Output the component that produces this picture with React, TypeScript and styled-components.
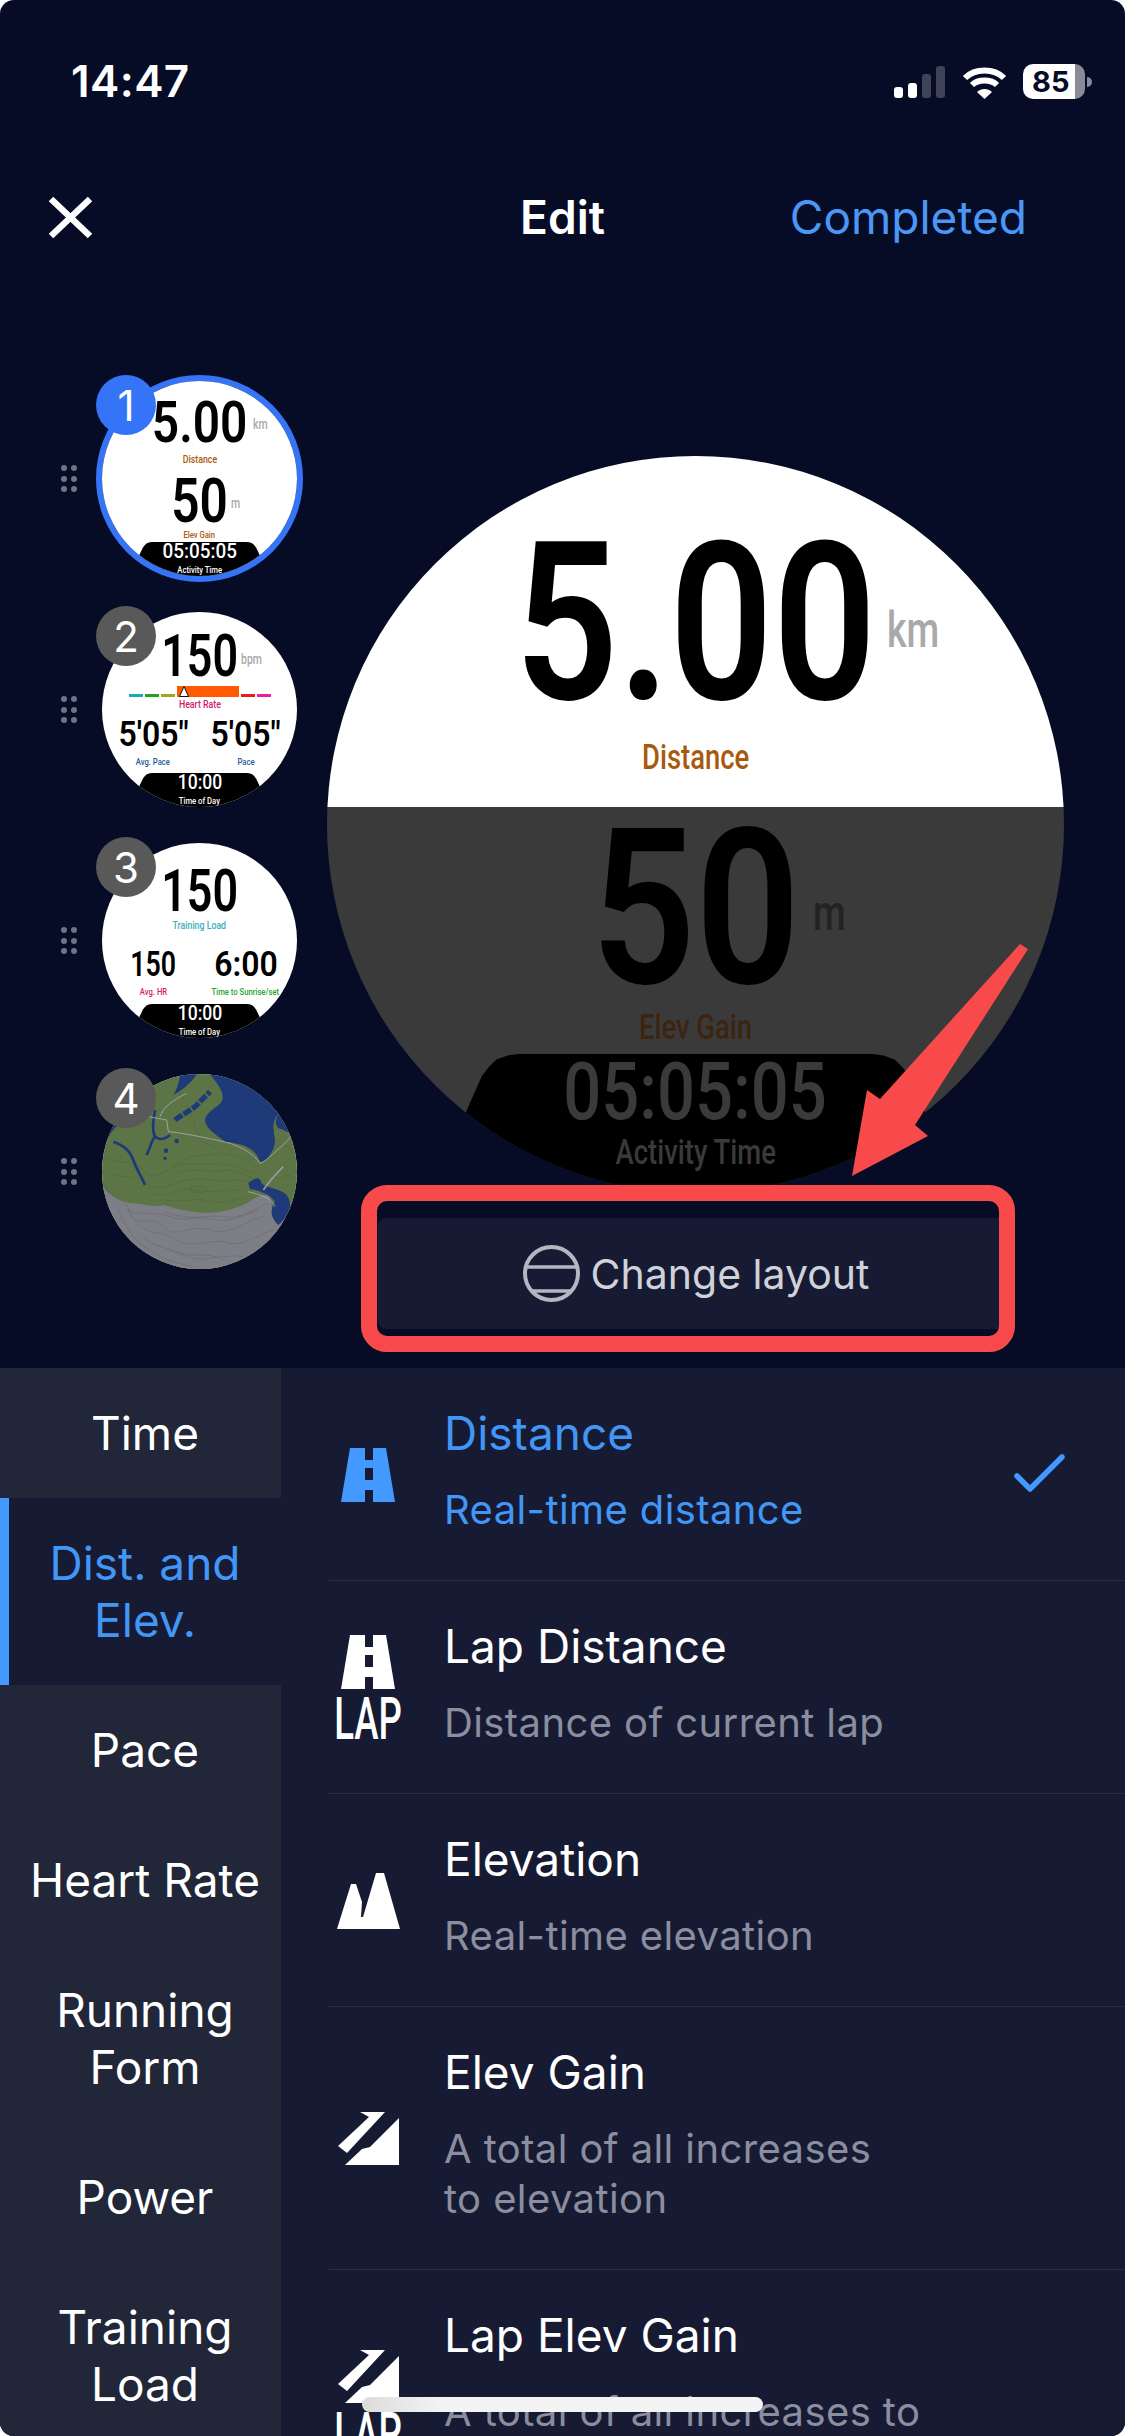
import styled, { createGlobalStyle } from 'styled-components'

const GlobalStyle = createGlobalStyle`
  html,
  body {
    margin: 0;
    padding: 0;
    background: #ffffff;
  }
  * {
    box-sizing: border-box;
  }
`

const categories = [
  'Time',
  'Dist. and Elev.',
  'Pace',
  'Heart Rate',
  'Running Form',
  'Power',
  'Training Load',
]

export default function App() {
  return (
    <Screen>
      <GlobalStyle />
      <StatusBar>
        <Clock>14:47</Clock>
        <StatusIcons>
          <SignalBars>
            <SignalBar $h={11} $on />
            <SignalBar $h={15} $on />
            <SignalBar $h={24} />
            <SignalBar $h={32} />
          </SignalBars>
          <WifiIcon />
          <Battery>
            <BatteryBody>85</BatteryBody>
            <BatteryNub />
          </Battery>
        </StatusIcons>
      </StatusBar>

      <NavBar>
        <CloseIcon />
        <NavTitle>Edit</NavTitle>
        <NavAction>Completed</NavAction>
      </NavBar>

      <Editor>
        <ThumbColumn>
          <ThumbRow>
            <DragDots />
            <ThumbSlot $active>
              <Face>
                <FirstFace />
              </Face>
              <Badge $active>1</Badge>
            </ThumbSlot>
          </ThumbRow>
          <ThumbRow>
            <DragDots />
            <ThumbSlot>
              <Face>
                <SecondFace />
              </Face>
              <Badge>2</Badge>
            </ThumbSlot>
          </ThumbRow>
          <ThumbRow>
            <DragDots />
            <ThumbSlot>
              <Face>
                <ThirdFace />
              </Face>
              <Badge>3</Badge>
            </ThumbSlot>
          </ThumbRow>
          <ThumbRow>
            <DragDots />
            <ThumbSlot>
              <Face>
                <MapFace />
              </Face>
              <Badge>4</Badge>
            </ThumbSlot>
          </ThumbRow>
        </ThumbColumn>

        <PreviewColumn>
          <BigFace>
            <BigTop>
              <ValueRow>
                <Digits $h={157} $sx={0.82} $mt={89}>
                  5.00
                </Digits>
                <Unit $fs={50} $x={191} $y={149} $color="#a9a9a9">
                  km
                </Unit>
              </ValueRow>
              <Caption $h={25} $mt={43} $color="#a85a0c">
                Distance
              </Caption>
            </BigTop>
            <BigBottom>
              <ValueRow>
                <Digits $h={155} $sx={0.84} $mt={24}>
                  50
                </Digits>
                <Unit $fs={50} $x={117} $y={81} $color="#232323">
                  m
                </Unit>
              </ValueRow>
              <Caption $h={25} $mt={29} $color="#3d2410">
                Elev Gain
              </Caption>
              <Footer $mt={14}>
                <Digits $h={56} $sx={0.85} $mt={10} $color="#3a3a3a" $weight={500}>
                  05:05:05
                </Digits>
                <Caption $h={25} $mt={20} $color="#3a3a3a">
                  Activity Time
                </Caption>
              </Footer>
            </BigBottom>
          </BigFace>

          <LayoutButton>
            <LayoutIcon />
            <span>Change layout</span>
            <RedFrame />
          </LayoutButton>
        </PreviewColumn>

        <ArrowMark viewBox="840 940 200 245">
          <polygon
            points="852,1176 867,1090 880,1099 1020,944 1028,949 915,1125 928,1136"
            fill="#f84a4a"
          />
        </ArrowMark>
      </Editor>

      <Panel>
        <Rail>
          {categories.map((name) => (
            <RailItem key={name} $active={name === 'Dist. and Elev.'}>
              {name}
            </RailItem>
          ))}
        </Rail>
        <MetricList>
          <MetricRow>
            <MetricIcon>
              <RoadIcon color="#4299ff" />
            </MetricIcon>
            <MetricText>
              <MetricTitle $active>Distance</MetricTitle>
              <MetricDesc $active>Real-time distance</MetricDesc>
            </MetricText>
            <CheckIcon />
          </MetricRow>
          <MetricRow>
            <MetricIcon>
              <RoadIcon color="#ffffff" />
              <LapLabel>LAP</LapLabel>
            </MetricIcon>
            <MetricText>
              <MetricTitle>Lap Distance</MetricTitle>
              <MetricDesc>Distance of current lap</MetricDesc>
            </MetricText>
          </MetricRow>
          <MetricRow>
            <MetricIcon>
              <PeakIcon />
            </MetricIcon>
            <MetricText>
              <MetricTitle>Elevation</MetricTitle>
              <MetricDesc>Real-time elevation</MetricDesc>
            </MetricText>
          </MetricRow>
          <MetricRow>
            <MetricIcon>
              <GainIcon />
            </MetricIcon>
            <MetricText>
              <MetricTitle>Elev Gain</MetricTitle>
              <MetricDesc>
                A total of all increases
                <br />
                to elevation
              </MetricDesc>
            </MetricText>
          </MetricRow>
          <MetricRow>
            <MetricIcon>
              <GainIcon />
              <LapLabel>LAP</LapLabel>
            </MetricIcon>
            <MetricText>
              <MetricTitle>Lap Elev Gain</MetricTitle>
              <MetricDesc>
                A total of all increases to
                <br />
                elevation of current lap
              </MetricDesc>
            </MetricText>
          </MetricRow>
        </MetricList>
      </Panel>

      <HomeIndicator />
    </Screen>
  )
}

function FirstFace() {
  return (
    <>
      <ValueRow>
        <Digits $h={41} $sx={0.83} $mt={21}>
          5.00
        </Digits>
        <Unit $fs={14} $x={53} $y={36} $color="#a9a9a9">
          km
        </Unit>
      </ValueRow>
      <Caption $h={8} $mt={13} $color="#a85a0c">
        Distance
      </Caption>
      <ValueRow>
        <Digits $h={43} $sx={0.82} $mt={16}>
          50
        </Digits>
        <Unit $fs={14} $x={31} $y={32} $color="#a9a9a9">
          m
        </Unit>
      </ValueRow>
      <Caption $h={7} $mt={8} $color="#a85a0c">
        Elev Gain
      </Caption>
      <Footer $mt={4}>
        <Digits $h={14} $sx={0.96} $mt={3} $color="#ffffff" $weight={500}>
          05:05:05
        </Digits>
        <Caption $h={7} $mt={7} $color="#ffffff">
          Activity Time
        </Caption>
      </Footer>
    </>
  )
}

function SecondFace() {
  return (
    <>
      <ValueRow>
        <Digits $h={42} $sx={0.76} $mt={23}>
          150
        </Digits>
        <Unit $fs={14} $x={41} $y={40} $color="#a9a9a9">
          bpm
        </Unit>
      </ValueRow>
      <ZoneBar>
        <Zone $w={14} $color="#17a9b5" />
        <Zone $w={14} $color="#1fa51f" />
        <Zone $w={14} $color="#a5a51f" />
        <Zone $w={62} $color="#ff5a00" $big />
        <Zone $w={14} $color="#e8201f" />
        <Zone $w={14} $color="#e81fa8" />
        <ZoneMarker viewBox="0 0 10 11">
          <polygon points="5,0.5 9.5,10.5 0.5,10.5" fill="#ffffff" stroke="#111111" />
        </ZoneMarker>
      </ZoneBar>
      <Caption $h={8} $mt={4} $color="#d01a6e">
        Heart Rate
      </Caption>
      <Pair $mt={13}>
        <PairCell>
          <Digits $h={25} $sx={0.91}>
            5'05"
          </Digits>
          <Caption $h={7} $mt={11} $color="#1f5c9a">
            Avg. Pace
          </Caption>
        </PairCell>
        <PairCell>
          <Digits $h={25} $sx={0.91}>
            5'05"
          </Digits>
          <Caption $h={7} $mt={11} $color="#1f5c9a">
            Pace
          </Caption>
        </PairCell>
      </Pair>
      <Footer $mt={8}>
        <Digits $h={14} $sx={0.89} $mt={3} $color="#ffffff" $weight={500}>
          10:00
        </Digits>
        <Caption $h={7} $mt={7} $color="#ffffff">
          Time of Day
        </Caption>
      </Footer>
    </>
  )
}

function ThirdFace() {
  return (
    <>
      <Digits $h={42} $sx={0.76} $mt={27}>
        150
      </Digits>
      <Caption $h={8} $mt={10} $color="#39b0b8">
        Training Load
      </Caption>
      <Pair $mt={22}>
        <PairCell>
          <Digits $h={25} $sx={0.76}>
            150
          </Digits>
          <Caption $h={7} $mt={11} $color="#d81a6e">
            Avg. HR
          </Caption>
        </PairCell>
        <PairCell>
          <Digits $h={25} $sx={0.91}>
            6:00
          </Digits>
          <Caption $h={7} $mt={11} $color="#22a52a">
            Time to Sunrise/set
          </Caption>
        </PairCell>
      </Pair>
      <Footer $mt={9}>
        <Digits $h={14} $sx={0.89} $mt={3} $color="#ffffff" $weight={500}>
          10:00
        </Digits>
        <Caption $h={7} $mt={7} $color="#ffffff">
          Time of Day
        </Caption>
      </Footer>
    </>
  )
}

// coordinates below are in the zoomed crop of the reference
function MapFace() {
  const greenLines = [
    'M232 1010 C270 1040 300 1010 340 1050 C370 1080 400 1060 430 1040 C470 1020 520 1040 560 1030 C600 1030 640 1050 680 1060',
    'M240 1060 C280 1080 320 1060 350 1090 C390 1120 420 1090 470 1080 C520 1070 570 1090 620 1080 C650 1080 670 1090 680 1080',
    'M370 1120 C410 1140 440 1100 490 1110 C540 1120 580 1110 640 1110',
    'M410 1140 C450 1150 490 1130 540 1145 C580 1150 620 1140 650 1130',
    'M430 1040 C470 1000 520 1010 570 1000 C610 1000 650 1020 680 1040',
    'M440 1060 C490 1040 540 1060 590 1050 C630 1050 650 1070 670 1075',
    'M480 1105 C490 1095 530 1095 530 1110 C530 1122 490 1122 480 1105',
    'M740 1050 C760 1030 790 1040 800 1060 M750 1075 C770 1060 790 1065 800 1080',
    'M730 990 C750 960 780 980 790 1000',
    'M420 790 C440 810 470 850 490 900 C500 950 530 980 560 985',
  ]
  const greyLines = [
    'M225 1100 C250 1140 290 1130 300 1180 C320 1230 370 1180 400 1220 C440 1260 480 1210 540 1230 C600 1250 650 1200 700 1190',
    'M290 1170 C340 1190 370 1170 420 1190 C470 1210 520 1180 580 1190 C630 1200 670 1170 710 1150',
    'M320 1210 C360 1250 400 1230 440 1260 C490 1290 540 1250 600 1270 C640 1280 690 1240 730 1230',
    'M340 1250 C380 1290 430 1280 470 1310 C520 1330 580 1300 640 1310',
    'M400 1175 C450 1195 510 1190 560 1200 C600 1205 640 1190 680 1170',
    'M260 1160 C280 1200 300 1260 360 1290 C400 1320 440 1330 490 1340',
    'M420 1290 C470 1320 530 1290 580 1320',
  ]
  return (
    <MapDrawing viewBox="216 762 585 585">
      <rect x="216" y="762" width="585" height="585" fill="#5d7546" />
      <path
        d="M540 762 C560 790 580 810 578 835 C575 860 530 870 525 900 C525 925 560 945 585 965 C620 970 660 975 680 1005 L692 1028 C715 1020 735 990 735 960 C730 930 725 900 745 885 C730 850 680 800 620 762 Z"
        fill="#1f3a78"
      />
      <path d="M745 885 C735 900 735 915 745 925 C760 930 775 935 785 945 L800 900 L760 860 Z" fill="#1f3a78" />
      <path d="M450 770 C445 790 440 810 430 825 C450 815 485 790 500 762 L450 762 Z" fill="#1f3a78" />
      <path d="M216 990 C230 960 245 930 265 915 L250 870 L216 920 Z" fill="#1f3a78" />
      <path
        d="M250 965 C280 975 300 990 310 1020 C320 1050 335 1070 345 1095"
        stroke="#1f3a78"
        strokeWidth="8"
        fill="none"
      />
      <path
        d="M350 1005 C360 985 365 960 375 950 M375 950 C385 955 395 965 420 945 M375 950 C365 930 370 900 375 870"
        stroke="#1f3a78"
        strokeWidth="8"
        fill="none"
      />
      <circle cx="408" cy="992" r="7" fill="#1f3a78" />
      <circle cx="405" cy="1015" r="5" fill="#1f3a78" />
      <circle cx="440" cy="963" r="7" fill="#1f3a78" />
      <path
        d="M435 900 C460 880 490 870 510 845 L540 815"
        stroke="#1f3a78"
        strokeWidth="16"
        strokeDasharray="26 5"
        fill="none"
      />
      <path
        d="M216 1090 C225 1120 260 1140 300 1150 C340 1150 370 1165 400 1155 C430 1165 460 1170 490 1175 C540 1185 600 1175 650 1150 C680 1130 700 1120 720 1130 C730 1160 720 1190 745 1215 L810 1150 L810 1360 L216 1360 Z"
        fill="#7e7f86"
      />
      <path
        d="M655 1090 C670 1075 690 1065 695 1090 C710 1105 750 1105 770 1125 C785 1145 785 1170 760 1200 L745 1215 C720 1190 720 1170 735 1145 C720 1125 690 1110 660 1108 Z"
        fill="#1f3a78"
      />
      {greenLines.map((d) => (
        <path key={d} d={d} stroke="#36452b" strokeWidth="1" fill="none" opacity="0.5" />
      ))}
      {greyLines.map((d) => (
        <path key={d} d={d} stroke="#37373e" strokeWidth="1" fill="none" opacity="0.5" />
      ))}
      <path
        d="M355 890 L410 900 L415 935 C470 940 560 960 600 970 C640 985 670 1000 690 1030 C715 1020 740 990 770 965 L790 940"
        stroke="#a9acac"
        strokeWidth="2.5"
        fill="none"
      />
      <path d="M390 890 C400 860 430 840 470 820" stroke="#a9acac" strokeWidth="2.5" fill="none" />
      <path d="M655 1115 C690 1125 720 1130 735 1160" stroke="#a9acac" strokeWidth="2.5" fill="none" />
      <path d="M700 1110 C720 1080 740 1060 760 1040" stroke="#9a9c9c" strokeWidth="5" fill="none" />
    </MapDrawing>
  )
}

function DragDots() {
  return (
    <DotGrid>
      <i />
      <i />
      <i />
      <i />
      <i />
      <i />
    </DotGrid>
  )
}

function WifiIcon() {
  return (
    <WifiSvg viewBox="0 0 45 32">
      <path d="M3 11 C13 1 32 1 42 11" stroke="#ffffff" strokeWidth="6" fill="none" />
      <path d="M10 18 C16 12 29 12 35 18" stroke="#ffffff" strokeWidth="6" fill="none" />
      <path d="M15 25 C19 21 26 21 30 25 L22.5 32 Z" fill="#ffffff" />
    </WifiSvg>
  )
}

function CloseIcon() {
  return (
    <CloseSvg viewBox="0 0 45 43">
      <path d="M3 3 L42 40 M42 3 L3 40" stroke="#ffffff" strokeWidth="6.5" fill="none" />
    </CloseSvg>
  )
}

function LayoutIcon() {
  return (
    <LayoutSvg viewBox="0 0 57 57">
      <circle cx="28.5" cy="28.5" r="26.5" stroke="#b4b6c2" strokeWidth="4" fill="none" />
      <path d="M3 22 H54 M9 46 H48" stroke="#b4b6c2" strokeWidth="3.5" fill="none" />
    </LayoutSvg>
  )
}

function RoadIcon({ color }: { color: string }) {
  return (
    <RoadSvg viewBox="0 0 54 54">
      <path
        d="M9 0 H24 V12 H32 V0 H45 L54 54 H32 V42 H24 V54 H0 Z M24 20 H32 V32 H24 Z"
        fill={color}
        fillRule="evenodd"
      />
    </RoadSvg>
  )
}

function PeakIcon() {
  return (
    <PeakSvg viewBox="0 0 63 57">
      <path
        d="M0 57 L14 12 L19 12 L25 30 L24 45 L26 45 L39 1 L47 1 L63 57 Z"
        fill="#ffffff"
      />
    </PeakSvg>
  )
}

function GainIcon() {
  return (
    <GainSvg viewBox="0 0 61 55">
      <path d="M22 1 L47 1 L9 42 L0 35 L31 6 Z" fill="#ffffff" />
      <path d="M61 7 L61 54 L7 54 L24 38 L32 36 Z" fill="#ffffff" />
    </GainSvg>
  )
}

function CheckIcon() {
  return (
    <CheckSvg viewBox="0 0 54 42">
      <path
        d="M4 24 L17 37 L49 5"
        stroke="#4299ff"
        strokeWidth="5.5"
        strokeLinecap="round"
        strokeLinejoin="round"
        fill="none"
      />
    </CheckSvg>
  )
}

// ========== Styled Components ==========

const sans = `Inter, 'Liberation Sans', sans-serif`
const watchFont = `Roboto, 'Liberation Sans', sans-serif`

const Screen = styled.div`
  position: relative;
  width: 1125px;
  height: 2436px;
  overflow: hidden;
  border-radius: 14px;
  background: #060c26;
  font-family: ${sans};
  color: #ffffff;
`

const StatusBar = styled.div`
  height: 120px;
  padding: 0 33px 0 71px;
  display: flex;
  justify-content: space-between;
  align-items: flex-start;
`

const Clock = styled.div`
  margin-top: 57px;
  font-size: 44px;
  line-height: 48px;
  font-weight: 600;
  letter-spacing: 0.4px;
`

const StatusIcons = styled.div`
  margin-top: 64px;
  display: flex;
  align-items: flex-start;
`

const SignalBars = styled.div`
  width: 51px;
  height: 34px;
  display: flex;
  justify-content: space-between;
  align-items: flex-end;
`

const SignalBar = styled.div<{ $h: number; $on?: boolean }>`
  width: 9px;
  height: ${(p) => p.$h}px;
  border-radius: 3px;
  background: ${(p) => (p.$on ? '#ffffff' : '#3e4358')};
`

const WifiSvg = styled.svg`
  width: 45px;
  height: 32px;
  margin: 3px 16px 0 17px;
`

const Battery = styled.div`
  display: flex;
  align-items: center;
`

const BatteryBody = styled.div`
  width: 62px;
  height: 35px;
  border-radius: 10px;
  background: linear-gradient(to right, #ffffff 84%, #8a8b99 84%);
  color: #060c26;
  font-size: 29px;
  line-height: 35px;
  font-weight: 700;
  padding-left: 9px;
`

const BatteryNub = styled.div`
  width: 5px;
  height: 10px;
  margin-left: 2px;
  border-radius: 0 5px 5px 0;
  background: #8a8b99;
`

const NavBar = styled.div`
  height: 194px;
  padding: 0 48px;
  display: grid;
  grid-template-columns: 1fr auto 1fr;
  align-items: center;
`

const CloseSvg = styled.svg`
  width: 45px;
  height: 43px;
`

const NavTitle = styled.div`
  font-size: 46px;
  font-weight: 600;
`

const NavAction = styled.div`
  justify-self: end;
  margin-right: 50px;
  font-size: 46px;
  color: #4a97f5;
`

const Editor = styled.div`
  position: relative;
  height: 1054px;
  padding-top: 49px;
  display: flex;
`

const ThumbColumn = styled.div`
  width: 327px;
  padding-left: 61px;
  display: flex;
  flex-direction: column;
`

const ThumbRow = styled.div`
  height: 231px;
  display: flex;
  align-items: center;
  gap: 19px;
`

const DotGrid = styled.div`
  width: 16px;
  display: grid;
  grid-template-columns: 6px 6px;
  justify-content: space-between;
  row-gap: 4.5px;

  i {
    width: 6px;
    height: 6px;
    border-radius: 50%;
    background: #6f7385;
  }
`

const ThumbSlot = styled.div<{ $active?: boolean }>`
  position: relative;
  width: 207px;
  height: 207px;
  border-radius: 50%;
  border: 6px solid ${(p) => (p.$active ? '#3574f6' : 'transparent')};
`

const Face = styled.div`
  width: 195px;
  height: 195px;
  border-radius: 50%;
  overflow: hidden;
  background: #ffffff;
  display: flex;
  flex-direction: column;
  align-items: center;
`

const Badge = styled.div<{ $active?: boolean }>`
  position: absolute;
  top: -6px;
  left: -6px;
  width: 60px;
  height: 60px;
  border-radius: 50%;
  background: ${(p) => (p.$active ? '#3574f6' : '#595959')};
  display: flex;
  align-items: center;
  justify-content: center;
  font-size: 42px;
`

const MapDrawing = styled.svg`
  width: 195px;
  height: 195px;
  flex: none;
`

const ValueRow = styled.div`
  position: relative;
  width: 100%;
  display: flex;
  justify-content: center;
`

// $h is the height of the digit on screen, font size follows from Roboto's cap height
const Digits = styled.div<{
  $h: number
  $sx: number
  $mt?: number
  $color?: string
  $weight?: number
}>`
  margin-top: ${(p) => p.$mt ?? 0}px;
  font-family: ${watchFont};
  font-size: ${(p) => p.$h / 0.711}px;
  line-height: ${(p) => p.$h}px;
  font-weight: ${(p) => p.$weight ?? 600};
  color: ${(p) => p.$color ?? '#000000'};
  white-space: nowrap;
  transform: scaleX(${(p) => p.$sx});
`

const Unit = styled.div<{ $fs: number; $x: number; $y: number; $color: string }>`
  position: absolute;
  left: calc(50% + ${(p) => p.$x}px);
  top: ${(p) => p.$y}px;
  font-family: ${watchFont};
  font-size: ${(p) => p.$fs}px;
  line-height: ${(p) => p.$fs}px;
  font-weight: 500;
  color: ${(p) => p.$color};
  white-space: nowrap;
  transform: scaleX(0.75);
  transform-origin: left center;
`

const Caption = styled.div<{ $h: number; $mt?: number; $color: string }>`
  margin-top: ${(p) => p.$mt ?? 0}px;
  font-family: ${watchFont};
  font-size: ${(p) => p.$h / 0.711}px;
  line-height: ${(p) => p.$h}px;
  font-weight: 500;
  color: ${(p) => p.$color};
  white-space: nowrap;
  transform: scaleX(0.78);
`

const Footer = styled.div<{ $mt: number }>`
  position: relative;
  margin-top: ${(p) => p.$mt}px;
  flex: 1;
  width: 100%;
  display: flex;
  flex-direction: column;
  align-items: center;

  &::before {
    content: '';
    position: absolute;
    inset: 0;
    background: #000000;
    clip-path: polygon(
      14% 100%,
      21% 16%,
      22% 9%,
      23% 4%,
      24.5% 1%,
      26% 0,
      74% 0,
      75.5% 1%,
      77% 4%,
      78% 9%,
      79% 16%,
      86% 100%
    );
  }

  > * {
    position: relative;
  }
`

const Pair = styled.div<{ $mt: number }>`
  margin-top: ${(p) => p.$mt}px;
  width: 185px;
  display: grid;
  grid-template-columns: 1fr 1fr;
`

const PairCell = styled.div`
  display: flex;
  flex-direction: column;
  align-items: center;
`

const ZoneBar = styled.div`
  position: relative;
  margin-top: 9px;
  width: 142px;
  height: 11px;
  display: flex;
  align-items: flex-end;
  gap: 2px;
`

const Zone = styled.div<{ $w: number; $color: string; $big?: boolean }>`
  width: ${(p) => p.$w}px;
  height: ${(p) => (p.$big ? 11 : 3)}px;
  background: ${(p) => p.$color};
`

const ZoneMarker = styled.svg`
  position: absolute;
  left: 50px;
  top: 0;
  width: 10px;
  height: 11px;
`

const PreviewColumn = styled.div`
  width: 737px;
  padding-top: 93px;
  display: flex;
  flex-direction: column;
`

const BigFace = styled.div`
  width: 737px;
  height: 737px;
  border-radius: 50%;
  overflow: hidden;
  display: flex;
  flex-direction: column;
`

const BigTop = styled.div`
  height: 351px;
  background: #ffffff;
  display: flex;
  flex-direction: column;
  align-items: center;
`

const BigBottom = styled.div`
  flex: 1;
  background: #3a3a3a;
  display: flex;
  flex-direction: column;
  align-items: center;
`

const LayoutButton = styled.div`
  position: relative;
  z-index: 1;
  margin: 25px 0 0 51px;
  width: 636px;
  height: 111px;
  border-radius: 8px;
  background: #161b33;
  display: flex;
  align-items: center;
  justify-content: center;
  gap: 11px;
  font-size: 41px;
  color: #d0d2da;
`

const LayoutSvg = styled.svg`
  width: 57px;
  height: 57px;
`

const RedFrame = styled.div`
  position: absolute;
  top: -33px;
  bottom: -23px;
  left: -17px;
  right: -1px;
  border: 16px solid #f84a4a;
  border-radius: 26px;
`

const ArrowMark = styled.svg`
  position: absolute;
  z-index: 2;
  left: 840px;
  top: 626px;
  width: 200px;
  height: 245px;
`

const Panel = styled.div`
  height: 1068px;
  display: flex;
  overflow: hidden;
  background: #161b33;
`

const Rail = styled.div`
  flex: none;
  width: 281px;
  background: #212639;
`

const RailItem = styled.div<{ $active?: boolean }>`
  padding: 36.5px 10px 36.5px 19px;
  text-align: center;
  font-size: 46px;
  line-height: 57px;
  color: ${(p) => (p.$active ? '#4296f5' : '#ffffff')};
  background: ${(p) => (p.$active ? '#161b33' : 'transparent')};
  box-shadow: ${(p) => (p.$active ? 'inset 9px 0 0 #4299ff' : 'none')};
`

const MetricList = styled.div`
  flex: 1;
  margin-left: 48px;
`

const MetricRow = styled.div`
  display: flex;
  align-items: center;
  padding: 35px 58px 45px 0;
  border-bottom: 1px solid #2a2f47;
`

const MetricIcon = styled.div`
  flex: none;
  width: 78px;
  margin: 11px 37px 0 0;
  display: flex;
  flex-direction: column;
  align-items: center;
  gap: 9px;
`

const MetricText = styled.div`
  flex: 1;
`

const MetricTitle = styled.div<{ $active?: boolean }>`
  font-size: 46px;
  line-height: 60px;
  color: ${(p) => (p.$active ? '#4296f5' : '#ffffff')};
`

const MetricDesc = styled.div<{ $active?: boolean }>`
  margin-top: 22px;
  font-size: 40px;
  line-height: 50px;
  letter-spacing: 0.4px;
  color: ${(p) => (p.$active ? '#4296f5' : '#8b8e9e')};
`

const LapLabel = styled.div`
  width: 64px;
  display: flex;
  justify-content: center;
  font-family: ${watchFont};
  font-size: 59px;
  line-height: 42px;
  font-weight: 500;
  white-space: nowrap;
  transform: scaleX(0.62);
`

const RoadSvg = styled.svg`
  width: 54px;
  height: 54px;
`

const PeakSvg = styled.svg`
  width: 63px;
  height: 57px;
`

const GainSvg = styled.svg`
  width: 61px;
  height: 55px;
`

const CheckSvg = styled.svg`
  flex: none;
  width: 54px;
  height: 42px;
  margin-top: 8px;
`

const HomeIndicator = styled.div`
  position: absolute;
  left: 362px;
  bottom: 24px;
  width: 401px;
  height: 15px;
  border-radius: 8px;
  background: linear-gradient(to right, #dcdcdc, #f3f3f3 20%, #f4f4f4);
`
